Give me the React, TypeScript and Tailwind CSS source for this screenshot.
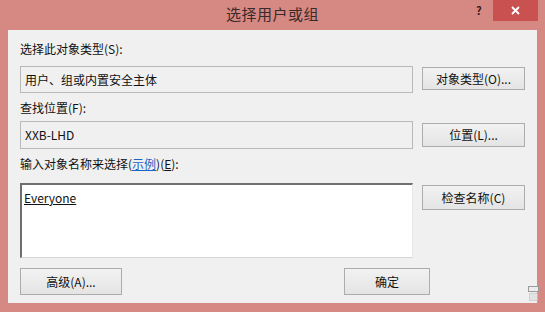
import React from "react";

const font = { fontFamily: '"Noto Sans CJK SC", "Noto Sans", sans-serif' };

function Btn({ children, className = "" }: { children: React.ReactNode; className?: string }) {
  return (
    <div
      className={`flex items-center justify-center border border-[#acacac] bg-gradient-to-b from-[#f2f2f2] to-[#e4e4e4] text-[12px] text-[#111] ${className}`}
    >
      {children}
    </div>
  );
}

export default function App() {
  return (
    <div className="relative w-[545px] h-[312px] bg-[#d68882] overflow-hidden" style={font}>
      {/* title bar */}
      <div className="relative h-[30px] flex items-center justify-center">
        <span className="text-[15px] text-[#3a2a2a] -mt-[2px] tracking-[0.5px]">选择用户或组</span>
        <span className="absolute left-[476px] top-[2px] text-[11px] font-bold text-[#3a1a1a]">?</span>
        <div className="absolute left-[493px] top-0 w-[45px] h-[21px] bg-[#c95250] flex items-center justify-center">
          <svg width="9" height="9" viewBox="0 0 9 9">
            <path d="M1 1L8 8M8 1L1 8" stroke="#fff" strokeWidth="1.8" />
          </svg>
        </div>
      </div>

      {/* client area */}
      <div className="ml-[8px] w-[529px] h-[273px] bg-[#f0f0f0] px-[12px] pt-[12px] text-[12px] text-[#111] leading-[14px]">
        <div>选择此对象类型(S):</div>
        <div className="mt-[10px] flex gap-[9px] items-start">
          <div className="w-[393px] h-[27px] border border-[#b9b9b9] bg-[#f0f0f0] flex items-center px-[4px]">
            用户、组或内置安全主体
          </div>
          <Btn className="w-[103px] h-[23px] mt-[1px]">对象类型(O)...</Btn>
        </div>

        <div className="mt-[8px]">查找位置(F):</div>
        <div className="mt-[6px] flex gap-[9px] items-start">
          <div className="w-[393px] h-[28px] border border-[#b9b9b9] bg-[#f0f0f0] flex items-center px-[4px]">
            XXB-LHD
          </div>
          <Btn className="w-[103px] h-[24px] mt-[2px]">位置(L)...</Btn>
        </div>

        <div className="mt-[8px]">
          输入对象名称来选择(<span className="text-[#1a63c7] underline">示例</span>)(<span className="underline">E</span>):
        </div>
        <div className="mt-[12px] flex gap-[9px] items-start">
          <div className="w-[393px] h-[75px] border-t-2 border-l-2 border-[#6f6f6f] border-r border-r-[#e8e8e8] border-b border-b-[#d4d4d4] bg-white px-[2px] pt-[6px]">
            <span className="underline">Everyone</span>
          </div>
          <Btn className="w-[103px] h-[25px] mt-[2px]">检查名称(C)</Btn>
        </div>

        <div className="mt-[10px] flex items-start">
          <Btn className="w-[102px] h-[27px]">高级(A)...</Btn>
          <Btn className="ml-[222px] w-[86px] h-[27px]">确定</Btn>
        </div>
      </div>

      {/* corner widget */}
      <div className="absolute left-[527px] top-[285px] w-[13px] h-[17px]">
        <svg width="13" height="17" viewBox="0 0 13 17">
          <rect x="1.5" y="1.5" width="10" height="5" fill="#ececec" stroke="#9a9a9a" />
          <rect x="2.5" y="8.5" width="8" height="7" fill="#e2e2e2" stroke="#b8b8b8" strokeDasharray="1 1" />
        </svg>
      </div>
    </div>
  );
}
